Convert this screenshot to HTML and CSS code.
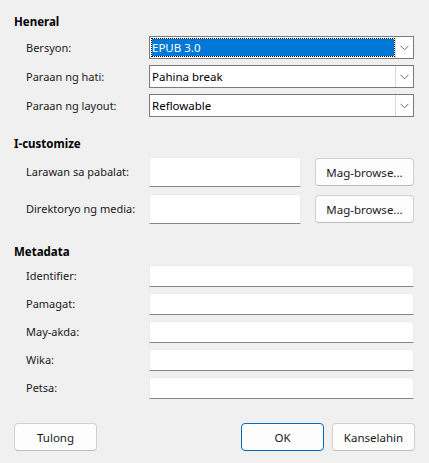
FILE: index.html
```html
<!DOCTYPE html>
<html lang="tl">
<head>
<meta charset="utf-8">
<title>EPUB Export</title>
<link rel="stylesheet" href="styles.css">
</head>
<body>
<div class="dialog">
  <section class="group group-general">
    <h2 class="heading">Heneral</h2>
    <div class="rows rows-combo">
      <span class="label">Bersyon:</span>
      <div class="combo combo-focus">
        <div class="combo-value"><span class="sel">EPUB 3.0</span></div>
        <div class="combo-btn"><svg width="9" height="6" viewBox="0 0 9 6"><path d="M0.5 0.8 L4.5 4.8 L8.5 0.8" fill="none" stroke="#6a6a6a" stroke-width="1"/></svg></div>
      </div>
      <span class="label">Paraan ng hati:</span>
      <div class="combo">
        <div class="combo-value">Pahina break</div>
        <div class="combo-btn"><svg width="9" height="6" viewBox="0 0 9 6"><path d="M0.5 0.8 L4.5 4.8 L8.5 0.8" fill="none" stroke="#6a6a6a" stroke-width="1"/></svg></div>
      </div>
      <span class="label">Paraan ng layout:</span>
      <div class="combo">
        <div class="combo-value">Reflowable</div>
        <div class="combo-btn"><svg width="9" height="6" viewBox="0 0 9 6"><path d="M0.5 0.8 L4.5 4.8 L8.5 0.8" fill="none" stroke="#6a6a6a" stroke-width="1"/></svg></div>
      </div>
    </div>
  </section>

  <section class="group group-custom">
    <h2 class="heading">I-customize</h2>
    <div class="rows rows-browse">
      <span class="label">Larawan sa pabalat:</span>
      <div class="browse-line">
        <div class="textbox textbox-tall"></div>
        <button class="btn btn-browse">Mag-browse...</button>
      </div>
      <span class="label">Direktoryo ng media:</span>
      <div class="browse-line">
        <div class="textbox textbox-tall"></div>
        <button class="btn btn-browse">Mag-browse...</button>
      </div>
    </div>
  </section>

  <section class="group group-meta">
    <h2 class="heading">Metadata</h2>
    <div class="rows rows-meta">
      <span class="label">Identifier:</span>
      <div class="textbox"></div>
      <span class="label">Pamagat:</span>
      <div class="textbox"></div>
      <span class="label">May-akda:</span>
      <div class="textbox"></div>
      <span class="label">Wika:</span>
      <div class="textbox"></div>
      <span class="label">Petsa:</span>
      <div class="textbox"></div>
    </div>
  </section>

  <footer class="buttons">
    <button class="btn btn-wide">Tulong</button>
    <div class="buttons-right">
      <button class="btn btn-wide btn-default">OK</button>
      <button class="btn btn-wide">Kanselahin</button>
    </div>
  </footer>
</div>
</body>
</html>
```

FILE: styles.css
```css
html, body {
  margin: 0;
  padding: 0;
  background: #f0f0f0;
}

body {
  font-family: "Noto Sans", "Open Sans", sans-serif;
  font-size: 11px;
  color: #1a1a1a;
}

.dialog {
  width: 429px;
  height: 463px;
  box-sizing: border-box;
  padding: 14px 15px 0 14px;
  display: flex;
  flex-direction: column;
}

.heading {
  margin: 0;
  font-size: 11.5px;
  font-weight: bold;
  line-height: 16px;
  height: 16px;
  color: #000;
}

.rows {
  display: grid;
  grid-template-columns: 123px 1fr;
  align-items: center;
  padding-left: 12px;
}

.label {
  line-height: 16px;
  white-space: nowrap;
}

.group-general .heading { margin-bottom: 6px; }
.rows-combo { row-gap: 6px; }

.group-custom { margin-top: 19px; }
.group-custom .heading { margin-bottom: 5px; }
.rows-browse { row-gap: 7px; }

.group-meta { margin-top: 20px; }
.group-meta .heading { margin-bottom: 5px; }
.rows-meta { row-gap: 6px; }

.combo {
  height: 23px;
  box-sizing: border-box;
  border: 1px solid #7a7a7a;
  background: #fff;
  display: flex;
  align-items: stretch;
  font-size: 11.5px;
}

.combo-value {
  flex: 1;
  padding-left: 2px;
  line-height: 21px;
  color: #000;
  white-space: nowrap;
}

.combo-focus .combo-value {
  padding: 1px 0 1px 1px;
}

.combo-focus .sel {
  display: block;
  height: 100%;
  box-sizing: border-box;
  border: 1px dotted #000;
  background: #0078d7;
  background-clip: padding-box;
  color: #fff;
  line-height: 17px;
  padding-left: 0;
}

.combo-btn {
  width: 17px;
  border-left: 1px solid #dadada;
  display: flex;
  align-items: center;
  justify-content: center;
}

.browse-line {
  display: flex;
  align-items: center;
  gap: 14px;
}

.textbox {
  height: 22px;
  box-sizing: border-box;
  background: #fff;
  border: 1px solid #ececec;
  border-bottom: 1px solid #868686;
  border-radius: 3px 3px 0 0;
}

.textbox-tall {
  width: 152px;
  height: 30px;
}

.btn {
  font-family: inherit;
  font-size: 11.5px;
  color: #1a1a1a;
  background: #fdfdfd;
  border: 1px solid #d0d0d0;
  border-bottom-color: #bcbcbc;
  border-radius: 4px;
  height: 28px;
  padding: 0;
  box-sizing: border-box;
}

.btn-browse {
  width: 99px;
}

.btn-wide {
  width: 83px;
}

.btn-default {
  border: 1px solid #0067c0;
}

.buttons {
  margin-top: 24px;
  display: flex;
  justify-content: space-between;
}

.buttons-right {
  display: flex;
  gap: 8px;
  margin-right: -1px;
}
```
